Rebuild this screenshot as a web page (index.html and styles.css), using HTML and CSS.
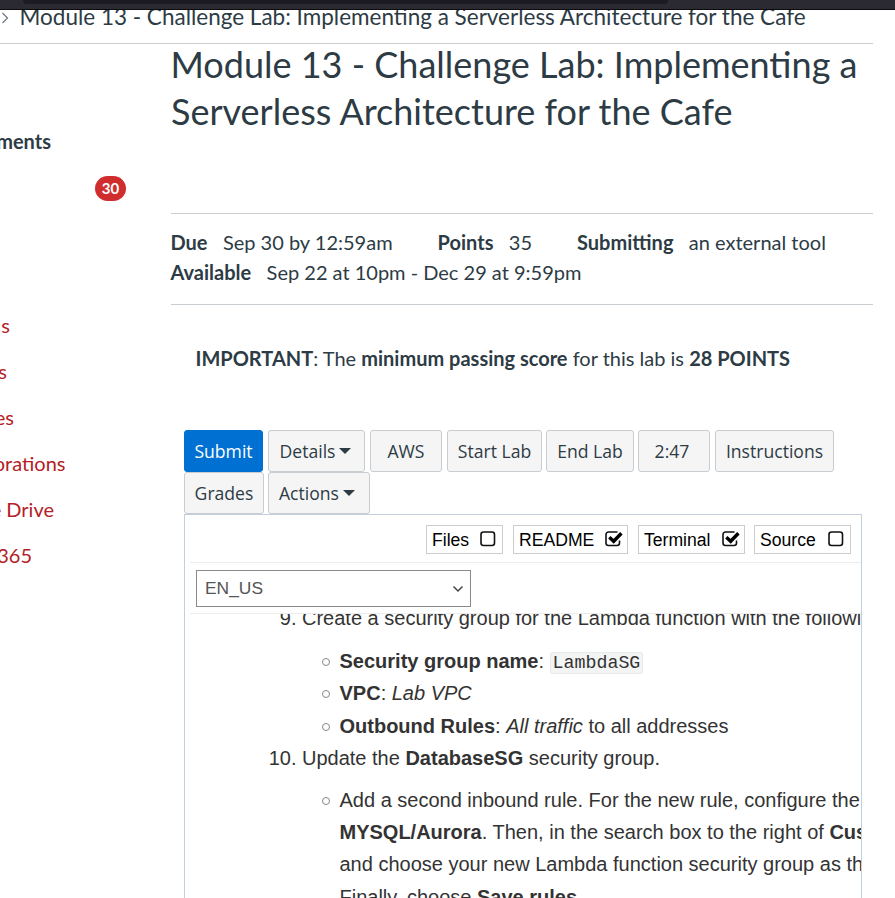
FILE: index.html
```html
<!DOCTYPE html>
<html lang="en">
<head>
<meta charset="utf-8">
<title>Module 13 - Challenge Lab</title>
<link rel="stylesheet" href="styles.css">
</head>
<body>
<div class="chrome"><div class="urlbar"></div></div>
<nav class="crumbs">
  <svg class="crumb-arrow" width="8" height="14" viewBox="0 0 8 14"><path d="M1.5 2 L6.5 7 L1.5 12" fill="none" stroke="#6b7780" stroke-width="1.2"/></svg>
  <span class="crumb-text">Module 13 - Challenge Lab: Implementing a Serverless Architecture for the Cafe</span>
</nav>
<div class="layout">
  <ul class="side">
    <li class="active w-ments"><span>ments</span></li>
    <li class="w-badge"><span class="badge">30</span></li>
    <li></li>
    <li></li>
    <li class="w-s1"><span>s</span></li>
    <li class="w-s2"><span>s</span></li>
    <li class="w-es"><span>es</span></li>
    <li class="w-orations"><span>orations</span></li>
    <li class="w-drive"><span>e Drive</span></li>
    <li class="w-365"><span>365</span></li>
  </ul>
  <main>
    <h1>Module 13 - Challenge Lab: Implementing a<br>Serverless Architecture for the Cafe</h1>
    <div class="details">
      <div class="row"><b>Due</b><span class="due">Sep 30 by 12:59am</span><b>Points</b><span class="points">35</span><b>Submitting</b><span>an external tool</span></div>
      <div class="row"><b>Available</b><span>Sep 22 at 10pm - Dec 29 at 9:59pm</span></div>
    </div>
    <p class="important"><b>IMPORTANT</b>: The <b>minimum passing score</b> for this lab is <b>28 POINTS</b></p>
    <div class="tool">
      <div class="buttons">
        <div class="btn primary b-submit">Submit</div>
        <div class="btn b-details">Details<i class="caret"></i></div>
        <div class="btn b-aws">AWS</div>
        <div class="btn b-start">Start Lab</div>
        <div class="btn b-end">End Lab</div>
        <div class="btn b-time">2:47</div>
        <div class="btn b-instr">Instructions</div>
      </div>
      <div class="buttons">
        <div class="btn b-grades">Grades</div>
        <div class="btn b-actions">Actions<i class="caret"></i></div>
      </div>
      <section class="panel">
        <div class="toggles">
          <div class="toggle t-files">Files<svg width="18" height="16" viewBox="0 0 18 16"><rect x="1" y="1" width="13.5" height="13.5" rx="2.5" class="box"/></svg></div>
          <div class="toggle t-readme">README<svg width="18" height="16" viewBox="0 0 18 16"><path class="box" d="M14.5 9.5V12a2.5 2.5 0 0 1-2.5 2.5H3.500A2.500 2.500 0 0 1 1 12V3.500A2.500 2.500 0 0 1 3.500 1H12.500"/><path class="tick" d="M4.300 6.300 L8.700 10.300 L16.400 2.300"/></svg></div>
          <div class="toggle t-term">Terminal<svg width="18" height="16" viewBox="0 0 18 16"><path class="box" d="M14.5 9.5V12a2.5 2.5 0 0 1-2.5 2.5H3.500A2.500 2.500 0 0 1 1 12V3.500A2.500 2.500 0 0 1 3.500 1H12.500"/><path class="tick" d="M4.300 6.300 L8.700 10.300 L16.400 2.300"/></svg></div>
          <div class="toggle t-source">Source<svg width="18" height="16" viewBox="0 0 18 16"><rect x="1" y="1" width="13.5" height="13.5" rx="2.5" class="box"/></svg></div>
        </div>
        <div class="langbar">
          <div class="select"><span>EN_US</span><svg width="12" height="8" viewBox="0 0 12 8"><path d="M1.500 1.500 L6 6 L10.500 1.500" fill="none" stroke="#444" stroke-width="1.500"/></svg></div>
        </div>
        <div class="doc">
          <div class="item first"><span class="num">9.</span><span>Create a security group for the Lambda function with the following settings:</span></div>
          <div class="sub"><i class="dot"></i><b>Security group name</b>: <code>LambdaSG</code></div>
          <div class="sub"><i class="dot"></i><b>VPC</b>: <em>Lab VPC</em></div>
          <div class="sub"><i class="dot"></i><b>Outbound Rules</b>: <em>All traffic</em> to all addresses</div>
          <div class="item ten"><span class="num">10.</span><span>Update the <b>DatabaseSG</b> security group.</span></div>
          <div class="sub"><i class="dot"></i>Add a second inbound rule. For the new rule, configure the<br><b>MYSQL/Aurora</b>. Then, in the search box to the right of <b>Custom</b><br>and choose your new Lambda function security group as the<br>Finally, choose <b>Save rules</b></div>
        </div>
      </section>
    </div>
  </main>
</div>
</body>
</html>
```
FILE: styles.css
```css
* { box-sizing: border-box; }
body { margin: 0; height: 898px; overflow: hidden; background: #fff; color: #2d3b45; font-family: Lato, "Liberation Sans", sans-serif; font-size: 20px; display: flex; flex-direction: column; }
.chrome { height: 10px; flex: none; background: #2b2a33; border-bottom: 1px solid #0c0c0d; }
.urlbar { width: 645px; height: 4px; margin-left: 23px; background: #1c1b22; border-radius: 0 0 4px 4px; }
.crumbs { height: 34px; flex: none; width: 873px; border-bottom: 1px solid #c7cdd1; display: flex; overflow: hidden; }
.crumb-arrow { margin: 1px 10.5px 0 1px; flex: none; }
.crumb-text { font-size: 22.5px; line-height: 28px; margin-top: -7px; white-space: nowrap; }
.layout { flex: 1; min-height: 0; display: flex; }
.side { width: 171px; flex: none; margin: 0; padding: 75px 0 0; list-style: none; color: #b42126; }
.side li { height: 46px; display: flex; align-items: center; justify-content: flex-end; white-space: nowrap; padding-bottom: 2px; }
.side .active { color: #2d3b45; font-weight: bold; }
.w-ments { width: 51px; }
.side .w-badge { width: 126px; padding-bottom: 0; }
.w-s1 { width: 10px; }
.w-s2 { width: 7px; }
.w-es { width: 14px; }
.w-orations { width: 65.5px; }
.w-drive { width: 54px; }
.w-365 { width: 32px; }
.badge { width: 31px; height: 25px; border-radius: 13px; background: #d02e2e; color: #fff; font-size: 15px; font-weight: bold; line-height: 25px; text-align: center; }
main { width: 702px; display: flex; flex-direction: column; }
h1 { margin: -3px 0 0; height: 173px; flex: none; border-bottom: 1px solid #c7cdd1; font-size: 36px; font-weight: normal; line-height: 47px; white-space: nowrap; text-indent: -0.5px; }
.details { height: 91px; flex: none; padding-top: 13px; border-bottom: 1px solid #c7cdd1; }
.row { height: 30px; line-height: 30px; display: flex; white-space: nowrap; margin-left: -0.5px; }
.row b { margin-right: 15.4px; }
.due { margin-right: 45px; }
.points { margin-right: 45px; }
.important { margin: 38px 0 0 24.5px; height: 30px; line-height: 30px; white-space: nowrap; }
.tool { width: 678px; margin: 57px 0 0 13px; flex: 1; min-height: 0; display: flex; flex-direction: column; }
.buttons { display: flex; height: 42px; flex: none; }
.btn { border: 1px solid #c7cdd1; border-radius: 3px; background: #f5f5f5; font-family: "Open Sans", "Noto Sans", sans-serif; font-size: 17.6px; white-space: nowrap; margin-right: 5px; flex: none; display: flex; align-items: center; justify-content: center; }
.primary { background: #0070d2; border-color: #0070d2; color: #fff; }
.b-submit { width: 79px; }
.b-details { width: 97px; padding-right: 2px; }
.b-aws { width: 72px; }
.b-start { width: 95px; margin-right: 4px; }
.b-end { width: 88px; margin-right: 4px; }
.b-time { width: 72px; padding-right: 4px; }
.b-instr { width: 119px; }
.b-grades { width: 80px; margin-right: 4px; }
.b-actions { width: 102px; padding-right: 4px; }
.caret { border: 6px solid transparent; border-top: 6px solid #2d3b45; border-bottom: 0; margin-left: 4px; }
.panel { flex: 1; min-height: 0; border: 1px solid #c3cfdc; border-bottom: 0; display: flex; flex-direction: column; overflow: hidden; font-family: "Liberation Sans", sans-serif; color: #333; }
.toggles { height: 48px; flex: none; margin-left: 5px; padding: 10px 10px 0 0; display: flex; justify-content: flex-end; border-bottom: 1px solid #ececec; }
.toggle { height: 29px; border: 1px solid #ccc; color: #000; font-size: 17.6px; line-height: 27px; display: flex; justify-content: space-between; align-items: center; padding: 1px 4.5px 0 5px; margin-left: 10px; }
.toggle svg { margin-top: -3px; }
.t-files { width: 77px; }
.t-readme { width: 115px; }
.t-term { width: 107px; }
.t-source { width: 97px; margin-left: 9px; }
.box { fill: none; stroke: #111; stroke-width: 1.6; }
.tick { fill: none; stroke: #000; stroke-width: 3.4; }
.langbar { height: 51px; flex: none; margin-left: 5px; padding: 7px 0 0 6px; border-bottom: 1px solid #ececec; }
.select { width: 275px; height: 37px; border: 1px solid #8a8a8a; padding: 0 6px 0 8px; display: flex; align-items: center; justify-content: space-between; color: #555; font-size: 17.4px; }
.doc { flex: 1; min-height: 0; overflow: hidden; font-size: 20px; line-height: 32.35px; white-space: nowrap; }
.item { display: flex; }
.num { width: 111.5px; text-align: right; margin-right: 5.5px; flex: none; }
.first { margin: -12px 0 10.7px; }
.ten { margin-bottom: 9.3px; }
.sub { padding-left: 154.5px; position: relative; }
.dot { position: absolute; left: 137px; top: 13px; width: 8px; height: 8px; border: 1px solid #888; border-radius: 50%; }
code { font-family: "Liberation Mono", monospace; font-size: 18.3px; line-height: 18px; background: #f3f4f4; border: 1px solid #e7eaed; border-radius: 3px; padding: 0 2px; }
```
